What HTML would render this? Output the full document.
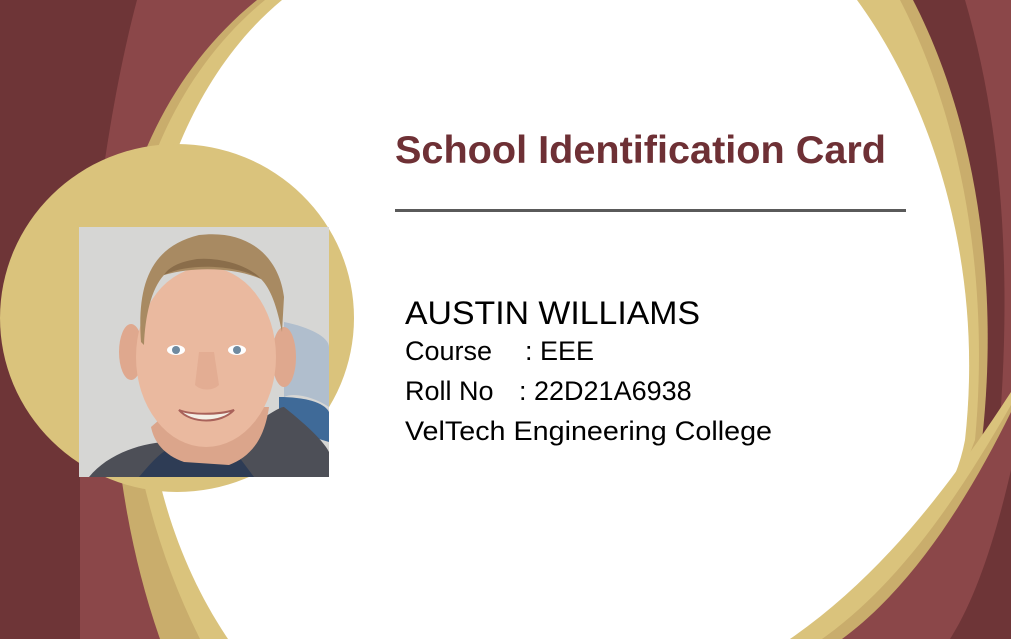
<!DOCTYPE html>
<html><head><style>html,body{margin:0;padding:0;background:#fff}svg{display:block}</style></head><body>
<svg width="1011" height="639" viewBox="0 0 1011 639" xmlns="http://www.w3.org/2000/svg">
<rect width="1011" height="639" fill="#8b4749"/>
<path d="M0,0 L137,0 C105,120 82,300 80,470 L80,639 L0,639 Z" fill="#6e3537"/>
<path d="M905,0 L965,0 C1000,120 1012,260 1000,420 L960,460 Z" fill="#6e3537"/>
<path d="M257,0 L913,0 C975,120 1000,280 982,440 L940,560 L800,639 L160,639 C125,540 108,420 112,300 C118,180 170,70 257,0 Z" fill="#c9ad6c"/>
<path d="M265,0 L900,0 C962,120 990,280 975,440 L930,560 L795,639 L200,639 C150,540 122,420 124,300 C130,180 180,70 265,0 Z" fill="#dac37c"/>
<path d="M282,0 L857,0 C930,100 985,260 965,440 C950,520 880,590 790,639 L228,639 C175,560 143,460 142,330 C142,220 185,80 282,0 Z" fill="#fff"/>
<path d="M1011,392 C960,470 890,570 790,639 L1011,639 Z" fill="#dac37c"/>
<path d="M1011,405 C965,485 905,580 822,639 L1011,639 Z" fill="#c9ad6c"/>
<path d="M1011,412 C970,495 915,585 842,639 L1011,639 Z" fill="#8b4749"/>
<path d="M1011,470 C995,540 975,600 950,639 L1011,639 Z" fill="#6e3537"/>
<ellipse cx="177" cy="318" rx="177" ry="174" fill="#dac37c"/>
<g transform="translate(79,227)">
<rect width="250" height="250" fill="#d6d6d4"/>
<path d="M205,95 C230,100 250,110 250,120 L250,180 C235,170 215,165 205,170 Z" fill="#9fb3cb" opacity="0.7"/>
<path d="M200,170 C225,170 245,175 250,185 L250,215 L200,200 Z" fill="#3f6a98"/>
<path d="M10,250 C30,225 70,212 105,215 L150,215 C185,190 200,180 205,180 C230,200 245,215 250,225 L250,250 Z" fill="#4d4f57"/>
<path d="M60,250 C75,232 85,222 95,220 L160,230 L175,250 Z" fill="#2e3c55"/>
<path d="M72,200 C75,215 85,228 105,235 L150,238 C170,230 185,215 190,180 L95,180 Z" fill="#dba58b"/>
<ellipse cx="52" cy="125" rx="12" ry="28" fill="#dfa88e"/>
<ellipse cx="205" cy="130" rx="12" ry="30" fill="#dfa88e"/>
<ellipse cx="127" cy="130" rx="70" ry="90" fill="#eab99f"/>
<path d="M62,115 C58,60 70,20 120,8 C170,2 200,30 205,70 L203,105 C198,80 192,62 182,52 C160,42 120,38 85,48 C72,62 66,90 65,118 Z" fill="#a88a62"/>
<path d="M85,48 C110,35 160,38 182,52 C170,38 140,30 118,32 C100,35 90,40 85,48 Z" fill="#8a6d4a"/>
<ellipse cx="97" cy="123" rx="9" ry="5" fill="#fff"/>
<circle cx="97" cy="123" r="4" fill="#6f8aa0"/>
<ellipse cx="158" cy="123" rx="9" ry="5" fill="#fff"/>
<circle cx="158" cy="123" r="4" fill="#6f8aa0"/>
<path d="M120,125 L116,158 C122,164 134,164 140,158 L135,125 Z" fill="#e3ad93"/>
<path d="M100,183 C112,197 142,197 155,183 C140,188 112,188 100,183 Z" fill="#f4efe6" stroke="#a9625a" stroke-width="2"/>
</g>
<g font-family="Liberation Sans, Arial, sans-serif">
<text x="395" y="163" font-size="38.5" font-weight="bold" fill="#6e3035" textLength="491" lengthAdjust="spacingAndGlyphs">School Identification Card</text>
<rect x="395" y="209" width="511" height="3" fill="#5a5a5a"/>
<text x="405" y="324" font-size="32" fill="#000" textLength="295" lengthAdjust="spacingAndGlyphs">AUSTIN WILLIAMS</text>
<text x="405" y="360" font-size="27" fill="#000">Course</text>
<text x="525" y="360" font-size="27" fill="#000">: EEE</text>
<text x="405" y="400" font-size="27" fill="#000">Roll No</text>
<text x="519" y="400" font-size="27" fill="#000">: 22D21A6938</text>
<text x="405" y="440" font-size="27" fill="#000" textLength="367" lengthAdjust="spacingAndGlyphs">VelTech Engineering College</text>
</g>
</svg>
</body></html>
